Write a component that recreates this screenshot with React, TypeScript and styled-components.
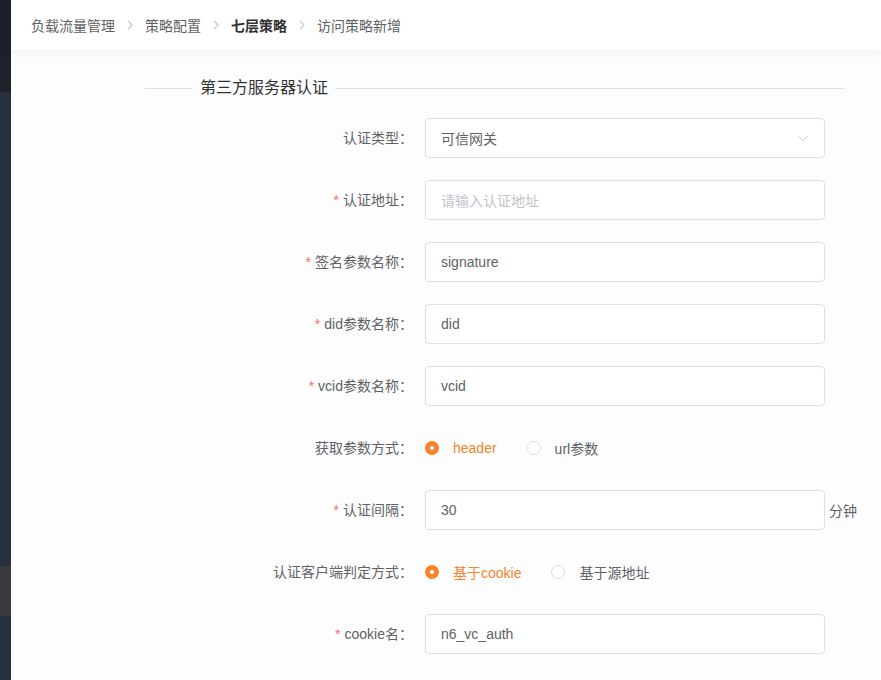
import styled, { createGlobalStyle } from "styled-components";

const GlobalStyle = createGlobalStyle`
  html, body {
    margin: 0;
    padding: 0;
    background: #fff;
  }
  body {
    font-family: "Liberation Sans", "Noto Sans CJK SC", sans-serif;
    font-size: 14px;
    color: #606266;
  }
`

const Page = styled.div`
  display: flex;
  width: 881px;
  height: 680px;
  overflow: hidden;
`

const Sidebar = styled.div`
  width: 11px;
  flex-shrink: 0;
  background: #27303f;
  display: flex;
  flex-direction: column;
`

const SideTop = styled.div`
  height: 92px;
  background: #1c212c;
`

const SideActive = styled.div`
  height: 50px;
  margin-top: 474px;
  background: #3a3b40;
`

const Main = styled.div`
  flex: 1;
  display: flex;
  flex-direction: column;
  background: #fdfdfd;
  min-width: 0;
`

const Header = styled.div`
  height: 50px;
  flex-shrink: 0;
  background: #fff;
  box-shadow: 0 2px 10px rgba(0, 0, 0, 0.06);
  display: flex;
  align-items: center;
  padding-left: 20px;
  position: relative;
  z-index: 1;
`

const CrumbItem = styled.span`
  display: inline-flex;
  align-items: center;
`

const Crumb = styled.span<{ $current?: boolean }>`
  font-size: 14px;
  color: ${p => (p.$current ? "#303133" : "#606266")};
  font-weight: ${p => (p.$current ? 700 : 400)};
`

const Sep = styled.span`
  display: inline-flex;
  width: 12px;
  margin: 0 9px;
  justify-content: center;
`

const Body = styled.div`
  padding: 27px 0 0 134px;
`

const Form = styled.div`
  width: 700px;
`

const Divider = styled.div`
  display: flex;
  align-items: center;
  height: 22px;
  margin-bottom: 19px;
  &::before, &::after {
    content: "";
    height: 1px;
    background: #dcdfe6;
  }
  &::before {
    width: 48px;
  }
  &::after {
    flex: 1;
  }
`

const DividerTitle = styled.span`
  padding: 0 7px;
  font-size: 16px;
  color: #303133;
  line-height: 22px;
`

const Row = styled.div`
  display: flex;
  align-items: center;
  height: 40px;
  margin-bottom: 22px;
`

const Label = styled.label`
  width: 280px;
  flex-shrink: 0;
  box-sizing: border-box;
  padding-right: 12px;
  text-align: right;
  font-size: 14px;
  color: #606266;
  line-height: 40px;
`

const Star = styled.span`
  color: #f56c6c;
  margin-right: 4px;
`

const InputBox = styled.div<{ $placeholder?: boolean }>`
  width: 400px;
  height: 40px;
  flex-shrink: 0;
  box-sizing: border-box;
  border: 1px solid #dcdfe6;
  border-radius: 4px;
  background: #fff;
  padding: 0 15px;
  display: flex;
  align-items: center;
  justify-content: space-between;
  font-size: 14px;
  color: ${p => (p.$placeholder ? "#c0c4cc" : "#606266")};
`

const Suffix = styled.span`
  margin-left: 4px;
  flex-shrink: 0;
  white-space: nowrap;
  font-size: 14px;
  color: #606266;
`

const RadioGroup = styled.div`
  display: flex;
  align-items: center;
`

const Radio = styled.span<{ $checked?: boolean }>`
  display: inline-flex;
  align-items: center;
  margin-right: 30px;
  font-size: 14px;
  color: ${p => (p.$checked ? "#f5842b" : "#606266")};
  &::before {
    content: "";
    width: 14px;
    height: 14px;
    box-sizing: border-box;
    border-radius: 50%;
    margin-right: 14px;
    background: #fff;
    border: ${p => (p.$checked ? "5px solid #f5842b" : "1px solid #dcdfe6")};
  }
`

const Chevron = ({ down }: { down?: boolean }) => (
  <svg width="12" height="12" viewBox="0 0 12 12" fill="none">
    {down ? (
      <path d="M1.5 4.2 L6 8.5 L10.5 4.2" stroke="#c0c4cc" strokeWidth="1" />
    ) : (
      <path d="M4.2 2 L8 6 L4.2 10" stroke="#c0c4cc" strokeWidth="1.1" />
    )}
  </svg>
)

type Field = {
  label: string
  required?: boolean
  value?: string
  placeholder?: string
  select?: boolean
  suffix?: string
  radios?: { text: string; checked?: boolean }[]
}

const fields: Field[] = [
  { label: "认证类型", value: "可信网关", select: true },
  { label: "认证地址", required: true, placeholder: "请输入认证地址" },
  { label: "签名参数名称", required: true, value: "signature" },
  { label: "did参数名称", required: true, value: "did" },
  { label: "vcid参数名称", required: true, value: "vcid" },
  { label: "获取参数方式", radios: [{ text: "header", checked: true }, { text: "url参数" }] },
  { label: "认证间隔", required: true, value: "30", suffix: "分钟" },
  { label: "认证客户端判定方式", radios: [{ text: "基于cookie", checked: true }, { text: "基于源地址" }] },
  { label: "cookie名", required: true, value: "n6_vc_auth" },
]

const crumbs = ["负载流量管理", "策略配置", "七层策略", "访问策略新增"]

const App = () => {
  return (
    <Page>
      <GlobalStyle />
      <Sidebar>
        <SideTop />
        <SideActive />
      </Sidebar>
      <Main>
        <Header>
          {crumbs.map((c, i) => (
            <CrumbItem key={c}>
              <Crumb $current={i === 2}>{c}</Crumb>
              {i < crumbs.length - 1 && (
                <Sep>
                  <Chevron />
                </Sep>
              )}
            </CrumbItem>
          ))}
        </Header>
        <Body>
          <Form>
            <Divider>
              <DividerTitle>第三方服务器认证</DividerTitle>
            </Divider>
            {fields.map(f => (
              <Row key={f.label}>
                <Label>
                  {f.required && <Star>*</Star>}
                  {f.label}：
                </Label>
                {f.radios ? (
                  <RadioGroup>
                    {f.radios.map(r => (
                      <Radio key={r.text} $checked={r.checked}>
                        {r.text}
                      </Radio>
                    ))}
                  </RadioGroup>
                ) : (
                  <>
                    <InputBox $placeholder={!f.value}>
                      <span>{f.value || f.placeholder}</span>
                      {f.select && <Chevron down />}
                    </InputBox>
                    {f.suffix && <Suffix>{f.suffix}</Suffix>}
                  </>
                )}
              </Row>
            ))}
          </Form>
        </Body>
      </Main>
    </Page>
  )
}

export default App
